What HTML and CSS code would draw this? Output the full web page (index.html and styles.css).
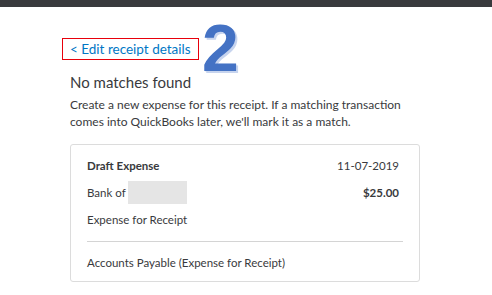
FILE: index.html
```html
<!DOCTYPE html>
<html>
<head>
<meta charset="utf-8">
<link rel="stylesheet" href="styles.css">
</head>
<body>
<div class="topbar"></div>
<main class="content">
  <div class="back-row">
    <a class="back-link">&lt; Edit receipt details</a>
    <span class="step-badge">2</span>
  </div>
  <h2 class="title">No matches found</h2>
  <p class="desc">Create a new expense for this receipt. If a matching transaction comes into QuickBooks later, we'll mark it as a match.</p>
  <section class="card">
    <div class="row">
      <span class="strong">Draft Expense</span>
      <span>11-07-2019</span>
    </div>
    <div class="row">
      <span class="bank">Bank of <span class="redact"></span></span>
      <span class="amount">$25.00</span>
    </div>
    <div class="row">
      <span>Expense for Receipt</span>
    </div>
    <hr class="divider">
    <div class="row">
      <span>Accounts Payable (Expense for Receipt)</span>
    </div>
  </section>
</main>
</body>
</html>
```

FILE: styles.css
```css
html, body {
  margin: 0;
  padding: 0;
  background: #ffffff;
}
body {
  font-family: "Lato", "Noto Sans", sans-serif;
  color: #393a3d;
  width: 492px;
  height: 295px;
  overflow: hidden;
}
.topbar {
  height: 7px;
  background: #393a3d;
}
.content {
  padding-left: 70px;
  padding-top: 31px;
}
.back-row {
  position: relative;
  height: 22px;
}
.back-link {
  position: absolute;
  left: -8px;
  top: 0;
  box-sizing: border-box;
  width: 137px;
  height: 22px;
  border: 1px solid #e8000b;
  padding-left: 7px;
  font-size: 13.5px;
  line-height: 20px;
  color: #0077c5;
  white-space: nowrap;
}
.step-badge {
  position: absolute;
  left: 132px;
  top: -23px;
  font-family: "Liberation Sans", Arial, sans-serif;
  font-weight: 700;
  font-size: 66px;
  line-height: 66px;
  color: #4472c4;
  text-shadow: 2px 2px 0 #c7d4ee, 1px 1px 0 #e6ecf8;
}
.title {
  margin: 12px 0 0 0;
  font-size: 15px;
  font-weight: 400;
  line-height: 20px;
  color: #393a3d;
}
.desc {
  margin: 4px 0 0 0;
  width: 350px;
  font-size: 12px;
  line-height: 17px;
  color: #393a3d;
}
.card {
  margin-top: 14px;
  box-sizing: border-box;
  width: 350px;
  height: 138px;
  border: 1px solid #dcdcdc;
  border-radius: 3px;
  padding: 11px 20px 0 16px;
  font-size: 11.5px;
}
.row {
  display: flex;
  justify-content: space-between;
  align-items: center;
  height: 18px;
}
.row + .row {
  margin-top: 9px;
}
.strong {
  font-weight: 700;
}
.amount {
  font-weight: 700;
}
.bank {
  display: flex;
  align-items: center;
  gap: 2px;
}
.redact {
  display: inline-block;
  width: 59px;
  height: 23px;
  background: #e5e5e5;
}
.divider {
  border: none;
  border-top: 1px solid #d4d4d4;
  margin: 13px -4px 11px 0;
}
```
